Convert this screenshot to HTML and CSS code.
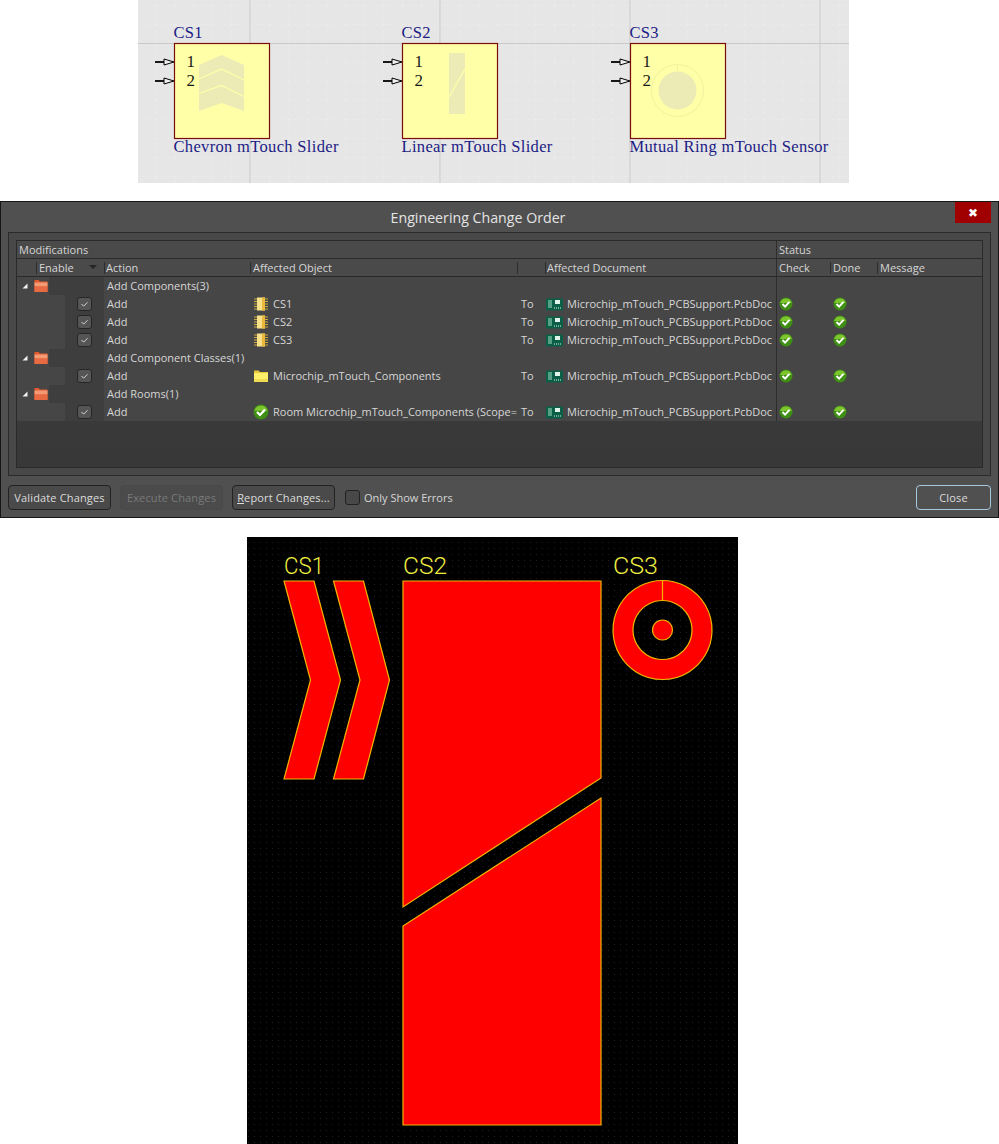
FILE: index.html
```html
<!DOCTYPE html>
<html lang="en">
<head>
<meta charset="utf-8">
<title>Engineering Change Order</title>
<link rel="stylesheet" href="styles.css">
</head>
<body>
<svg class="defs" width="0" height="0" aria-hidden="true">
  <defs>
    <symbol id="i-arrow" viewBox="0 0 6 6"><path d="M5.500 .5V5.500H.5Z" fill="#f2f2f2"/></symbol>
    <symbol id="i-folder" viewBox="0 0 14 12">
      <path d="M.5 0h4l1.500 1.500h7.500v10.500h-13z" fill="#e4582f"/>
      <path d="M.5 2.500h13v4h-13z" fill="#f29a74"/>
      <path d="M.5 6.500h13v5.500h-13z" fill="#e86a42"/>
    </symbol>
    <symbol id="i-yfolder" viewBox="0 0 16 14">
      <path d="M1 1.500h4.500l1.500 1.500h8v10h-14z" fill="#e6c83a"/>
      <path d="M1 4h14v9h-14z" fill="#fff06a"/>
      <path d="M1 10h14v3h-14z" fill="#f0dc50"/>
    </symbol>
    <symbol id="i-chip" viewBox="0 0 16 16">
      <path d="M1 3h3M1 5.500h3M1 8h3M1 10.500h3M1 13h3M12 3h3M12 5.500h3M12 8h3M12 10.500h3M12 13h3" stroke="#c9a93c" stroke-width="1"/>
      <rect x="4" y="1.500" width="8" height="13" fill="#f8e08a"/>
      <rect x="9" y="1.500" width="3" height="13" fill="#e9b83a"/>
    </symbol>
    <symbol id="i-ok" viewBox="0 0 14 14">
      <circle cx="7" cy="7" r="6.500" fill="#3f8f14"/>
      <path d="M1.200 6a6 6 0 0 1 11.600 0z" fill="#7cc52c"/>
      <path d="M3.500 7l2.600 2.600 4.400-4.700" fill="none" stroke="#fff" stroke-width="2"/>
    </symbol>
    <symbol id="i-pcb" viewBox="0 0 17 13">
      <rect x="0" y="0.500" width="17" height="12" fill="#0c5f47"/>
      <path d="M2 3h4M2 5h4M2 7h4M2 9h4" stroke="#9fe0c4" stroke-width="1"/>
      <rect x="9" y="2" width="5" height="4" fill="#dff3ea"/>
      <path d="M8 10h1M10 10h1M12 10h1M14 10h1" stroke="#dff3ea" stroke-width="1"/>
    </symbol>
    <symbol id="i-tick" viewBox="0 0 15 14">
      <path d="M4 7l2.500 2.500 4.500-4.500" fill="none" stroke="#e8e8e8" stroke-width="1"/>
    </symbol>
    <pattern id="minor" width="19" height="19" patternUnits="userSpaceOnUse" x="17" y="5">
      <path d="M0 0H19M0 0V19" class="minor-line"/>
    </pattern>
    <pattern id="dots" width="6" height="6" patternUnits="userSpaceOnUse">
      <rect x="2" y="2" width="1" height="1" class="dot"/>
    </pattern>
    <g id="pins">
      <path d="M17 0h9" class="pin-lead"/>
      <path d="M26 -3l10 3-10 3z" class="pin-head"/>
    </g>
  </defs>
</svg>

<svg class="sch" width="711" height="183" viewBox="0 0 711 183">
  <rect width="711" height="183" class="sch-bg"/>
  <rect width="711" height="183" fill="url(#minor)"/>
  <path d="M112 0V183M302 0V183M492 0V183M682 0V183M0 43.500H711" class="major-line"/>

  <text x="35.500" y="38" class="sch-label">CS1</text>
  <use href="#pins" y="62"/><use href="#pins" y="81"/>
  <rect x="36.500" y="43.500" width="95" height="95" class="sch-box"/>
  <text x="48.500" y="67" class="sch-num">1</text>
  <text x="48.500" y="86" class="sch-num">2</text>
  <path d="M61 65L83.500 55 106 65V111L83.500 103 61 111Z" class="ghost"/>
  <path d="M61 79L83.500 69 106 80M61 93.500L83.500 85.500 106 96.500" class="ghost-line"/>
  <text x="35.500" y="152" class="sch-label">Chevron mTouch Slider</text>

  <text x="263.500" y="38" class="sch-label">CS2</text>
  <use href="#pins" x="228" y="62"/><use href="#pins" x="228" y="81"/>
  <rect x="264.500" y="43.500" width="95" height="95" class="sch-box"/>
  <text x="276.500" y="67" class="sch-num">1</text>
  <text x="276.500" y="86" class="sch-num">2</text>
  <rect x="311" y="53" width="16" height="61" class="ghost"/>
  <path d="M311 97L327 69" class="ghost-line"/>
  <text x="263.500" y="152" class="sch-label">Linear mTouch Slider</text>

  <text x="491.500" y="38" class="sch-label">CS3</text>
  <use href="#pins" x="456" y="62"/><use href="#pins" x="456" y="81"/>
  <rect x="492.500" y="43.500" width="95" height="95" class="sch-box"/>
  <text x="504.500" y="67" class="sch-num">1</text>
  <text x="504.500" y="86" class="sch-num">2</text>
  <circle cx="539.500" cy="90.500" r="26" class="ghost-ring"/>
  <circle cx="539.500" cy="90.500" r="19" class="ghost"/>
  <path d="M539.500 64.500V71" class="ghost-ring"/>
  <text x="491.500" y="152" class="sch-label">Mutual Ring mTouch Sensor</text>
</svg>

<section class="dialog">
  <header class="titlebar">
    <h1 class="title">Engineering Change Order</h1>
    <button class="win-close" type="button">✖</button>
  </header>
  <div class="panel">
    <div class="table">
      <div class="band">
        <div class="band-mods">Modifications</div>
        <div class="band-status">Status</div>
      </div>
      <div class="row head">
        <div class="h-blank"></div>
        <div class="h-cell h-enable">Enable<span class="sort"></span></div>
        <div class="h-cell h-action">Action</div>
        <div class="h-cell">Affected Object</div>
        <div class="h-cell"></div>
        <div class="h-cell h-doc">Affected Document</div>
        <div class="h-cell h-check">Check</div>
        <div class="h-cell">Done</div>
        <div class="h-cell">Message</div>
      </div>

      <div class="row group">
        <div class="tree"><svg class="arrow"><use href="#i-arrow"/></svg><svg class="folder"><use href="#i-folder"/></svg><span class="strip"></span></div>
        <div class="g-label">Add Components(3)</div>
        <div class="c-check"></div>
      </div>
      <div class="row item">
        <div class="tree"><span class="cbx"><svg class="tick"><use href="#i-tick"/></svg></span></div>
        <div class="c-action">Add</div>
        <div class="c-object"><svg class="ico"><use href="#i-chip"/></svg>CS1</div>
        <div class="c-to">To</div>
        <div class="c-doc"><svg class="pcb"><use href="#i-pcb"/></svg>Microchip_mTouch_PCBSupport.PcbDoc</div>
        <div class="c-check"><svg class="ok"><use href="#i-ok"/></svg></div>
        <div class="c-done"><svg class="ok"><use href="#i-ok"/></svg></div>
        <div></div>
      </div>
      <div class="row item">
        <div class="tree"><span class="cbx"><svg class="tick"><use href="#i-tick"/></svg></span></div>
        <div class="c-action">Add</div>
        <div class="c-object"><svg class="ico"><use href="#i-chip"/></svg>CS2</div>
        <div class="c-to">To</div>
        <div class="c-doc"><svg class="pcb"><use href="#i-pcb"/></svg>Microchip_mTouch_PCBSupport.PcbDoc</div>
        <div class="c-check"><svg class="ok"><use href="#i-ok"/></svg></div>
        <div class="c-done"><svg class="ok"><use href="#i-ok"/></svg></div>
        <div></div>
      </div>
      <div class="row item">
        <div class="tree"><span class="cbx"><svg class="tick"><use href="#i-tick"/></svg></span></div>
        <div class="c-action">Add</div>
        <div class="c-object"><svg class="ico"><use href="#i-chip"/></svg>CS3</div>
        <div class="c-to">To</div>
        <div class="c-doc"><svg class="pcb"><use href="#i-pcb"/></svg>Microchip_mTouch_PCBSupport.PcbDoc</div>
        <div class="c-check"><svg class="ok"><use href="#i-ok"/></svg></div>
        <div class="c-done"><svg class="ok"><use href="#i-ok"/></svg></div>
        <div></div>
      </div>

      <div class="row group">
        <div class="tree"><svg class="arrow"><use href="#i-arrow"/></svg><svg class="folder"><use href="#i-folder"/></svg><span class="strip"></span></div>
        <div class="g-label">Add Component Classes(1)</div>
        <div class="c-check"></div>
      </div>
      <div class="row item">
        <div class="tree"><span class="cbx"><svg class="tick"><use href="#i-tick"/></svg></span></div>
        <div class="c-action">Add</div>
        <div class="c-object"><svg class="ico"><use href="#i-yfolder"/></svg>Microchip_mTouch_Components</div>
        <div class="c-to">To</div>
        <div class="c-doc"><svg class="pcb"><use href="#i-pcb"/></svg>Microchip_mTouch_PCBSupport.PcbDoc</div>
        <div class="c-check"><svg class="ok"><use href="#i-ok"/></svg></div>
        <div class="c-done"><svg class="ok"><use href="#i-ok"/></svg></div>
        <div></div>
      </div>

      <div class="row group">
        <div class="tree"><svg class="arrow"><use href="#i-arrow"/></svg><svg class="folder"><use href="#i-folder"/></svg><span class="strip"></span></div>
        <div class="g-label">Add Rooms(1)</div>
        <div class="c-check"></div>
      </div>
      <div class="row item">
        <div class="tree"><span class="cbx"><svg class="tick"><use href="#i-tick"/></svg></span></div>
        <div class="c-action">Add</div>
        <div class="c-object"><svg class="ico"><use href="#i-ok"/></svg>Room Microchip_mTouch_Components (Scope=</div>
        <div class="c-to">To</div>
        <div class="c-doc"><svg class="pcb"><use href="#i-pcb"/></svg>Microchip_mTouch_PCBSupport.PcbDoc</div>
        <div class="c-check"><svg class="ok"><use href="#i-ok"/></svg></div>
        <div class="c-done"><svg class="ok"><use href="#i-ok"/></svg></div>
        <div></div>
      </div>
      <div class="empty"></div>
    </div>
  </div>
  <footer class="footer">
    <button class="btn" type="button">Validate Changes</button>
    <button class="btn btn-off" type="button">Execute Changes</button>
    <button class="btn" type="button"><u>R</u>eport Changes...</button>
    <label class="only"><span class="only-box"></span>Only Show Errors</label>
    <button class="btn btn-close" type="button">Close</button>
  </footer>
</section>

<svg class="pcbview" width="491" height="607" viewBox="247 537 491 607">
  <rect x="247" y="537" width="491" height="607" class="pcb-bg"/>
  <rect x="247" y="537" width="491" height="607" fill="url(#dots)"/>
  <text x="284" y="574" textLength="40" lengthAdjust="spacingAndGlyphs" class="pcb-label">CS1</text>
  <text x="403" y="574" textLength="44" lengthAdjust="spacingAndGlyphs" class="pcb-label">CS2</text>
  <text x="613" y="574" textLength="45" lengthAdjust="spacingAndGlyphs" class="pcb-label">CS3</text>
  <path d="M284 581H314L340.500 680 314 779H284L310.500 680Z" class="copper"/>
  <path d="M333.500 581H363.500L389.500 680 363.500 779H333.500L360 680Z" class="copper"/>
  <path d="M403 581H601V778L403 907Z" class="copper"/>
  <path d="M601 798V1125H403V926Z" class="copper"/>
  <path fill-rule="evenodd" d="M662.500 580.500a49.500 49.500 0 1 0 .01 0zM662.500 600.500a29.500 29.500 0 1 1 -.01 0z" class="copper"/>
  <path d="M662.500 580.500V600.500" class="copper"/>
  <circle cx="662.500" cy="630" r="10" class="copper"/>
</svg>
</body>
</html>
```

FILE: styles.css
```css
* { box-sizing: border-box; }
html, body { margin: 0; padding: 0; }
body {
  width: 999px;
  height: 1144px;
  overflow: hidden;
  background: #fff;
  display: flex;
  flex-direction: column;
  font-family: "Open Sans", "Noto Sans", sans-serif;
}
.defs { position: absolute; }

/* schematic */
.sch { display: block; margin-left: 138px; flex: none; }
.sch-bg { fill: #e6e6e6; }
.minor-line { stroke: #ededed; stroke-width: 1; stroke-dasharray: 3 3; fill: none; }
.major-line { stroke: #c9c9c9; stroke-width: 1; fill: none; }
.sch-label { font: 16.5px "Liberation Serif", serif; letter-spacing: .33px; fill: #1c1c84; }
.sch-num { font: 17px "Liberation Serif", serif; fill: #1a1a1a; }
.sch-box { fill: #ffffa8; stroke: #7a0c0c; stroke-width: 1.2; }
.pin-lead { stroke: #000; stroke-width: 1.8; fill: none; }
.pin-head { stroke: #000; stroke-width: 1; fill: #efefef; }
.ghost { fill: #ecebb6; }
.ghost-line { stroke: #ffffa8; stroke-width: 1.2; fill: none; }
.ghost-ring { stroke: #f1f19e; stroke-width: 1; fill: none; }

/* dialog */
.dialog {
  flex: none;
  height: 317px;
  margin-top: 18px;
  background: #505050;
  border: 1px solid #161616;
  color: #d6d6d6;
  font-size: 11px;
  display: flex;
  flex-direction: column;
}
.titlebar {
  height: 30px;
  display: flex;
  justify-content: center;
  align-items: center;
  position: relative;
  padding-right: 43px;
}
.title { margin: 0; font-size: 14.2px; font-weight: 400; color: #e4e4e4; }
.win-close {
  position: absolute;
  right: 7px;
  top: 0;
  width: 36px;
  height: 21px;
  border: 0;
  padding: 0;
  background: #a00000;
  color: #fff;
  font: bold 12px "DejaVu Sans", sans-serif;
}
.panel {
  height: 244px;
  margin: 0 7px;
  padding: 7px;
  background: #484848;
  border: 1px solid #2b2b2b;
}
.table {
  --cols: 19px 68px 146px 267px 28px 231px 54px 47px 1fr;
  height: 228px;
  border: 1px solid #2a2a2a;
  background: linear-gradient(#3f3f3f, #383838);
  display: flex;
  flex-direction: column;
}
.band {
  height: 18px;
  flex: none;
  display: grid;
  grid-template-columns: 759px 1fr;
  background: #4a4a4a;
  border-bottom: 1px solid #2a2a2a;
  line-height: 17px;
}
.band-mods { padding-left: 2px; }
.band-status { padding-left: 2px; border-left: 1px solid #2d2d2d; }
.row {
  display: grid;
  grid-template-columns: var(--cols);
  height: 18px;
  flex: none;
  line-height: 18px;
  white-space: nowrap;
}
.head {
  background: #4a4a4a;
  border-bottom: 1px solid #2a2a2a;
}
.h-cell { padding-left: 2px; border-left: 1px solid #2d2d2d; margin-top: 3px; height: 12px; line-height: 12px; }
.h-enable { position: relative; }
.h-action { padding-left: 1px; }
.h-doc { padding-left: 1px; }
.h-check { margin-top: 0; height: 17px; line-height: 18px; }
.sort {
  position: absolute;
  left: 52px;
  top: 3px;
  width: 0;
  height: 0;
  border-left: 4px solid transparent;
  border-right: 4px solid transparent;
  border-top: 4px solid #242424;
}
.group, .item { background: #464646; }
.tree { display: flex; align-items: center; background: #464646; }
.group .tree { grid-column: 1 / span 2; padding-left: 5px; }
.item .tree { grid-column: 1 / span 2; background: linear-gradient(90deg, #464646 55%, #3e3e3e 55%); padding-left: 60px; }
.arrow { width: 6px; height: 6px; flex: none; }
.folder { width: 14px; height: 12px; flex: none; margin-left: 6px; }
.strip { flex: 1; height: 18px; margin-left: 1px; background: #3e3e3e; }
.cbx {
  width: 15px;
  height: 14px;
  flex: none;
  background: #555;
  border: 1px solid #262626;
  border-radius: 3px;
  display: flex;
}
.tick { width: 13px; height: 12px; }
.g-label { grid-column: 3 / span 4; padding-left: 3px; }
.group .c-check { grid-column: 7; }
.c-action { padding-left: 3px; }
.c-object { padding-left: 3px; display: flex; align-items: center; gap: 4px; overflow: hidden; }
.ico { width: 16px; height: 16px; flex: none; }
.c-to { padding-left: 4px; }
.c-doc { padding-left: 1px; display: flex; align-items: center; gap: 4px; }
.pcb { width: 17px; height: 13px; flex: none; }
.c-check { border-left: 1px solid #2d2d2d; padding-left: 2px; display: flex; align-items: center; }
.c-done { padding-left: 3px; display: flex; align-items: center; }
.ok { width: 14px; height: 14px; flex: none; }
.empty { flex: 1; }

/* footer */
.footer {
  flex: 1;
  display: flex;
  align-items: center;
  padding: 2px 7px 0;
  gap: 9px;
}
.btn {
  width: 103px;
  height: 25px;
  border: 1px solid #222;
  border-radius: 4px;
  background: #4a4a4a;
  color: #dcdcdc;
  font: inherit;
  letter-spacing: .15px;
  padding: 0;
}
.btn-off { border-color: #494949; color: #7a7a7a; background: #4b4b4b; }
.btn-close { width: 75px; margin-left: auto; border-color: #a6c8dc; background: #505050; }
.only { display: flex; align-items: center; gap: 4px; margin-left: 1px; }
.only-box {
  width: 15px;
  height: 15px;
  background: #484848;
  border: 1px solid #222;
  border-radius: 3px;
}

/* pcb */
.pcbview { display: block; margin: 19px 0 0 247px; flex: none; }
.pcb-bg { fill: #000; }
.dot { fill: #1f1f1f; }
.copper { fill: #ff0000; stroke: #f2b400; stroke-width: 1.2; }
.pcb-label { font: 300 24px Roboto, sans-serif; fill: #eeee40; }
```
